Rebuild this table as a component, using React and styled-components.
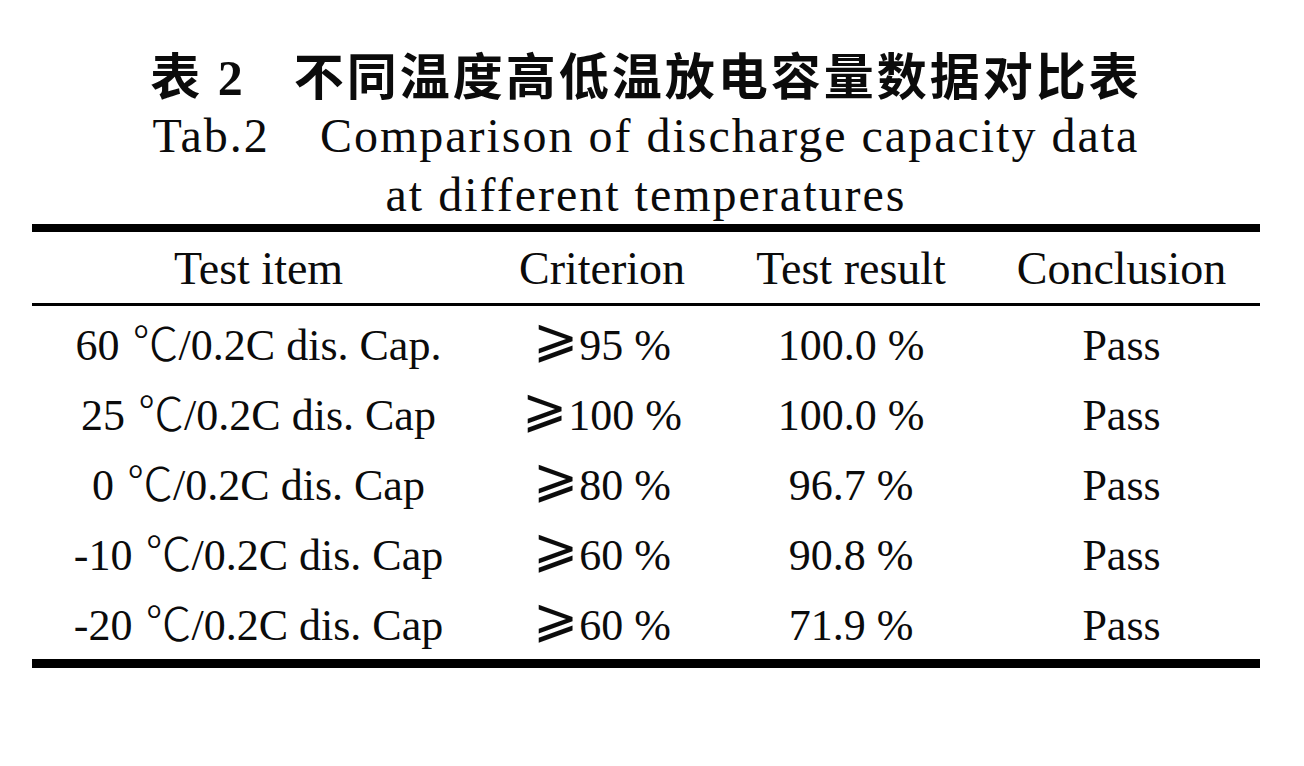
import React from 'react';
import styled, { createGlobalStyle } from 'styled-components';

const rows = [
  { temp: '60', tail: '/0.2C dis. Cap.', criterion: '95 %', result: '100.0 %', conclusion: 'Pass' },
  { temp: '25', tail: '/0.2C dis. Cap', criterion: '100 %', result: '100.0 %', conclusion: 'Pass' },
  { temp: '0', tail: '/0.2C dis. Cap', criterion: '80 %', result: '96.7 %', conclusion: 'Pass' },
  { temp: '-10', tail: '/0.2C dis. Cap', criterion: '60 %', result: '90.8 %', conclusion: 'Pass' },
  { temp: '-20', tail: '/0.2C dis. Cap', criterion: '60 %', result: '71.9 %', conclusion: 'Pass' },
];

const App = () => {
  return (
    <Page>
      <GlobalStyle />
      <Wrap>
        <CnTitle>
          表 <Num>2</Num>
          <Gap />
          不同温度高低温放电容量数据对比表
        </CnTitle>
        <EnTitle>
          Tab.2<Gap $w={50} />Comparison of discharge capacity data
        </EnTitle>
        <EnTitle>at different temperatures</EnTitle>
        <Table>
          <HeadRow>
            <Cell>Test item</Cell>
            <Cell>Criterion</Cell>
            <Cell>Test result</Cell>
            <Cell>Conclusion</Cell>
          </HeadRow>
          <Body>
            {rows.map((r) => (
              <Row key={r.temp}>
                <Cell>
                  {r.temp} <Deg>℃</Deg>
                  {r.tail}
                </Cell>
                <Cell>
                  <Geq>⩾</Geq>
                  {r.criterion}
                </Cell>
                <Cell>{r.result}</Cell>
                <Cell>{r.conclusion}</Cell>
              </Row>
            ))}
          </Body>
        </Table>
      </Wrap>
    </Page>
  );
};

const GlobalStyle = createGlobalStyle`
  body {
    margin: 0;
    background: #ffffff;
  }
`;

const Page = styled.div`
  width: 1304px;
  height: 766px;
  background: #ffffff;
  color: #0b0b0b;
  font-family: "Liberation Serif", "DejaVu Serif", "Noto Sans CJK SC", serif;
`;

const Wrap = styled.div`
  width: 1228px;
  margin-left: 32px;
  padding-top: 45px;
  display: flex;
  flex-direction: column;
  align-items: center;
`;

const CnTitle = styled.div`
  font-family: "Noto Sans CJK SC", sans-serif;
  font-weight: 700;
  font-size: 50px;
  letter-spacing: 3px;
  line-height: 56px;
  white-space: nowrap;
`;

const Num = styled.span`
  font-family: "Liberation Serif", serif;
  font-weight: 700;
  font-size: 50px;
`;

const Gap = styled.span`
  display: inline-block;
  width: ${(p) => p.$w || 48}px;
`;

const EnTitle = styled.div`
  font-size: 48px;
  letter-spacing: 2px;
  line-height: 59px;
  white-space: nowrap;
`;

const Table = styled.div`
  align-self: stretch;
  border-top: 8px solid #000;
  border-bottom: 9px solid #000;
`;

const Line = styled.div`
  display: grid;
  grid-template-columns: 453px 234px 264px 277px;
  align-items: center;
`;

const HeadRow = styled(Line)`
  height: 69px;
  padding-top: 2px;
  border-bottom: 3px solid #000;
  font-size: 46px;
`;

const Body = styled.div`
  padding-top: 3px;
`;

const Row = styled(Line)`
  height: 66px;
  padding-top: 4px;
  font-size: 44px;
  line-height: 50px;
`;

const Cell = styled.div`
  text-align: center;
  white-space: nowrap;
`;

const Deg = styled.span`
  font-family: "Noto Sans CJK SC", sans-serif;
  font-weight: 300;
  font-size: 46px;
  line-height: 0;
  margin-left: 2px;
`;

const Geq = styled.span`
  font-family: "DejaVu Sans", sans-serif;
  font-weight: 200;
  font-size: 54px;
  line-height: 0;
  position: relative;
  top: -4px;
  margin-right: 1px;
`;

export default App;
